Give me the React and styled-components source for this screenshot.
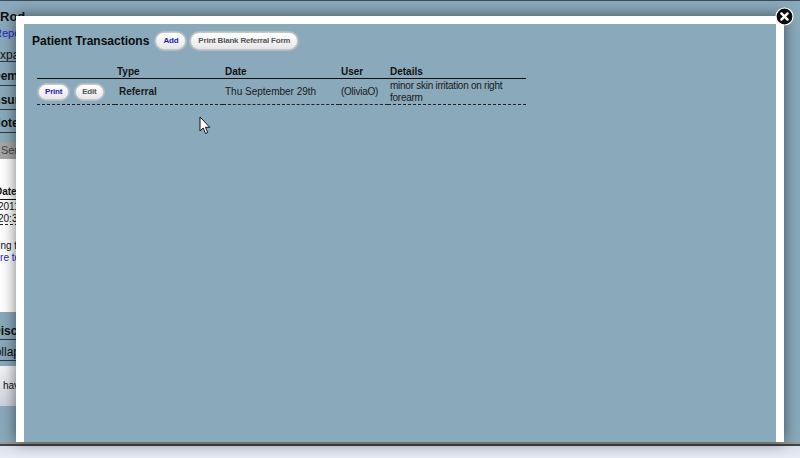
import React from 'react';
import styled, { createGlobalStyle } from 'styled-components';

const GlobalStyle = createGlobalStyle`
    html, body {
        margin: 0;
        padding: 0;
        background: #8aa9bb;
    }
    body {
        font-family: 'Liberation Sans', Arial, sans-serif;
        color: #111;
    }
`;

const Page = styled.div`
    position: relative;
    width: 800px;
    height: 458px;
    overflow: hidden;
    display: flex;
    flex-direction: column;
`;

const Backdrop = styled.div`
    height: 442px;
    flex: none;
    background: #8aa9bb;
    border-top: 1px solid #3d4c55;
    box-sizing: border-box;
    overflow: hidden;
`;

const BackdropColumn = styled.div`
    width: 760px;
    white-space: nowrap;
`;

const Name = styled.div`
    font-size: 13px;
    font-weight: bold;
    line-height: 16px;
    margin-top: 8px;
`;

const BlueLink = styled.div`
    color: #2222cc;
    font-size: ${p => p.$size || 11}px;
    line-height: ${p => p.$line || 14}px;
    margin-top: ${p => p.$top || 0}px;
    text-indent: ${p => p.$offset}px;
`;

const Section = styled.div`
    font-size: 12px;
    font-weight: ${p => (p.$bold ? 'bold' : 'normal')};
    line-height: 12px;
    height: ${p => p.$height}px;
    box-sizing: border-box;
    padding-top: ${p => p.$pad}px;
    text-indent: ${p => p.$offset}px;
    border-bottom: 1px solid #2e3a42;
    overflow: hidden;
`;

const SearchBar = styled.div`
    height: 17px;
    margin-top: 9px;
    background: #a6a6a6;
    color: #444;
    font-size: 11px;
    line-height: 17px;
    padding-left: 1px;
`;

const WhitePanel = styled.div`
    background: #fff;
    height: 153px;
    padding-top: 27px;
    box-sizing: border-box;
    font-size: 10px;
`;

const ColHead = styled.div`
    font-weight: bold;
    line-height: 12px;
    text-indent: -5px;
    padding-bottom: 1px;
    border-bottom: 1px solid #111;
`;

const ColCell = styled.div`
    line-height: ${p => (p.$last ? 11 : 12)}px;
    text-indent: -2px;
    padding-top: ${p => (p.$last ? 0 : 1)}px;
    border-bottom: ${p => (p.$last ? '1px dashed #222' : 'none')};
`;

const Note = styled.div`
    line-height: 12px;
    margin-top: 15px;
    text-indent: -14px;
`;

const LowerPanel = styled.div`
    background: linear-gradient(#f4f4f6, #ccd2dc);
    height: 40px;
    margin-top: 5px;
    padding: 13px 0 0 3px;
    box-sizing: border-box;
    font-size: 10px;
    line-height: 13px;
`;

const BottomBar = styled.div`
    height: 16px;
    flex: none;
    box-sizing: border-box;
    border-top: 2px solid #999;
    background: linear-gradient(#444 2px, #dde3ee 2px, #e6ebf4);
`;

const Modal = styled.div`
    position: absolute;
    left: 16px;
    right: 16px;
    top: 16px;
    bottom: 16px;
    box-sizing: border-box;
    border: solid #fff;
    border-width: 8px 8px 0;
    background: #8aa9bb;
    box-shadow: 0 0 14px rgba(0, 0, 0, 0.55);
    padding: 8px 8px 0;
`;

const CloseButton = styled.button`
    position: absolute;
    top: -17px;
    right: -18px;
    width: 19px;
    height: 19px;
    padding: 0;
    border: none;
    background: none;
    display: block;
    z-index: 2;
`;

const HeaderRow = styled.div`
    display: flex;
    align-items: center;
    height: 18px;
`;

const Title = styled.h1`
    margin: 0 6px 0 0;
    font-size: 12px;
    font-weight: bold;
    color: #0c0c0c;
`;

const Pill = styled.a`
    display: inline-block;
    box-sizing: border-box;
    height: ${p => (p.$small ? 16 : 18)}px;
    line-height: ${p => (p.$small ? 14 : 16)}px;
    padding: 0 ${p => (p.$small ? 6 : 7)}px;
    margin-right: ${p => (p.$small ? 6 : 4)}px;
    border: 1px solid #c4c8cc;
    border-radius: 9px;
    background: linear-gradient(#ffffff, #e6e6e6);
    box-shadow: 0 0 1px 1px #b4bcc2;
    font-size: 8px;
    font-weight: bold;
    letter-spacing: -0.2px;
    color: ${p => (p.$blue ? '#2222bb' : '#555')};
    white-space: nowrap;
`;

const Table = styled.table`
    border-collapse: collapse;
    table-layout: fixed;
    width: 489px;
    margin: 14px 0 0 5px;
    font-size: 10px;
`;

const HeadCell = styled.th`
    text-align: left;
    font-weight: bold;
    width: ${p => p.$w}px;
    height: 14px;
    padding: 0 0 0 2px;
    border-bottom: 1px solid #111;
`;

const Cell = styled.td`
    height: 25px;
    padding: 0 0 0 ${p => p.$pad ?? 2}px;
    border-bottom: 1px dashed #222;
    line-height: 12px;
    font-weight: ${p => (p.$bold ? 'bold' : 'normal')};
    letter-spacing: ${p => (p.$tight ? '-0.26px' : 'normal')};
    color: #1a1a1a;
    white-space: ${p => (p.$nowrap ? 'nowrap' : 'normal')};
`;

const Cursor = styled.svg`
    position: absolute;
    left: 199px;
    top: 116px;
    z-index: 3;
`;

const App = () => {
    return (
        <Page>
            <GlobalStyle />
            <Backdrop>
                <BackdropColumn>
                    <Name>Rod</Name>
                    <BlueLink $offset={-6} $top={1}>Reports</BlueLink>
                    <Section $height={22} $pad={9} $offset={-8}>Expand</Section>
                    <Section $bold $height={24} $pad={8} $offset={-8}>Demographics</Section>
                    <Section $bold $height={24} $pad={8} $offset={-10}>Insurance</Section>
                    <Section $bold $height={23} $pad={7} $offset={-8}>Notes</Section>
                    <SearchBar>Service</SearchBar>
                    <WhitePanel>
                        <ColHead>Date</ColHead>
                        <ColCell>2011</ColCell>
                        <ColCell $last>20:30</ColCell>
                        <Note>Using the</Note>
                        <BlueLink $offset={-11} $size={10} $line={12}>here to</BlueLink>
                    </WhitePanel>
                    <Section $bold $height={28} $pad={13} $offset={-8}>Disclosures</Section>
                    <Section $height={21} $pad={6} $offset={-14}>Collapse</Section>
                    <LowerPanel>have</LowerPanel>
                </BackdropColumn>
            </Backdrop>
            <BottomBar />
            <Modal>
                <CloseButton aria-label="Close">
                    <svg width="19" height="19" viewBox="0 0 19 19">
                        <circle cx="9.5" cy="9.5" r="8.5" fill="#0a0a0a" stroke="#fff" strokeWidth="1.2" />
                        <path d="M6.4 6.4l6.2 6.2M12.6 6.4l-6.2 6.2" stroke="#fff" strokeWidth="2.4" strokeLinecap="round" />
                    </svg>
                </CloseButton>
                <HeaderRow>
                    <Title>Patient Transactions</Title>
                    <Pill $blue>Add</Pill>
                    <Pill>Print Blank Referral Form</Pill>
                </HeaderRow>
                <Table>
                    <thead>
                        <tr>
                            <HeadCell $w={76} />
                            <HeadCell $w={106}>Type</HeadCell>
                            <HeadCell $w={114}>Date</HeadCell>
                            <HeadCell $w={47}>User</HeadCell>
                            <HeadCell>Details</HeadCell>
                        </tr>
                    </thead>
                    <tbody>
                        <tr>
                            <Cell $nowrap $pad={1}>
                                <Pill $small $blue>Print</Pill>
                                <Pill $small>Edit</Pill>
                            </Cell>
                            <Cell $bold $pad={4}>Referral</Cell>
                            <Cell>Thu September 29th</Cell>
                            <Cell $tight>(OliviaO)</Cell>
                            <Cell $tight>minor skin irritation on right forearm</Cell>
                        </tr>
                    </tbody>
                </Table>
            </Modal>
            <Cursor width="12" height="19" viewBox="0 0 12 19">
                <path d="M1 1v14l3.2-3 2.3 5.5 2.2-1-2.3-5.2h4.4z" fill="#fff" stroke="#111" strokeWidth="1" />
            </Cursor>
        </Page>
    );
};

export default App;
